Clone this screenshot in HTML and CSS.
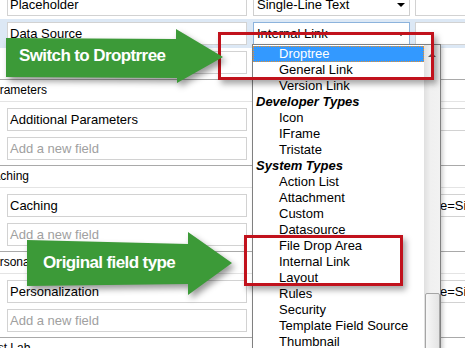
FILE: index.html
```html
<!DOCTYPE html>
<html lang="en">
<head>
  <meta charset="UTF-8">
  <title>Template Builder</title>
  <link rel="stylesheet" href="styles.css">
</head>
<body>

  <div class="builder">
    <div class="section section-data">
      <div class="rows">
        <div class="row">
          <div class="field">Placeholder</div>
          <div class="select">Single-Line Text</div>
          <div class="extra"></div>
        </div>
        <div class="row selected">
          <div class="field">Data Source</div>
          <div class="select focused">Internal Link</div>
          <div class="extra"></div>
        </div>
        <div class="row">
          <div class="field new">Add a new field</div>
        </div>
      </div>
    </div>

    <div class="section">
      <div class="section-title">Parameters</div>
      <div class="rows">
        <div class="row">
          <div class="field">Additional Parameters</div>
          <div class="select">Text</div>
          <div class="extra"></div>
        </div>
        <div class="row">
          <div class="field new">Add a new field</div>
        </div>
      </div>
    </div>

    <div class="section">
      <div class="section-title">Caching</div>
      <div class="rows">
        <div class="row">
          <div class="field">Caching</div>
          <div class="select">Caching</div>
          <div class="extra">Type=Sitecore</div>
        </div>
        <div class="row">
          <div class="field new">Add a new field</div>
        </div>
      </div>
    </div>

    <div class="section">
      <div class="section-title">Personalization</div>
      <div class="rows">
        <div class="row">
          <div class="field">Personalization</div>
          <div class="select">Rules</div>
          <div class="extra">Type=Sitecore</div>
        </div>
        <div class="row">
          <div class="field new">Add a new field</div>
        </div>
      </div>
    </div>

    <div class="section">
      <div class="section-title">Test Lab</div>
    </div>
  </div>

  <!-- open field type list -->
  <div class="dropdown">
    <div class="options">
      <div class="option active">Droptree</div>
      <div class="option">General Link</div>
      <div class="option">Version Link</div>
      <div class="group">Developer Types</div>
      <div class="option">Icon</div>
      <div class="option">IFrame</div>
      <div class="option">Tristate</div>
      <div class="group">System Types</div>
      <div class="option">Action List</div>
      <div class="option">Attachment</div>
      <div class="option">Custom</div>
      <div class="option">Datasource</div>
      <div class="option">File Drop Area</div>
      <div class="option">Internal Link</div>
      <div class="option">Layout</div>
      <div class="option">Rules</div>
      <div class="option">Security</div>
      <div class="option">Template Field Source</div>
      <div class="option">Thumbnail</div>
    </div>
    <div class="scrollbar">
      <div class="scroll-up"></div>
      <div class="scroll-thumb"></div>
    </div>
  </div>

  <!-- callouts -->
  <div class="callout callout-top"></div>
  <div class="callout callout-bottom"></div>

  <div class="arrow arrow-top">
    <svg viewBox="0 0 217 54" width="217" height="54">
      <polygon points="0,9 170,10 170,0 217,28 171,54 171,49 0,48" />
    </svg>
    <span class="arrow-label">Switch to Droptrree</span>
  </div>

  <div class="arrow arrow-bottom">
    <svg viewBox="0 0 205 63" width="205" height="63">
      <polygon points="0,8 161,12 161,0 205,31 161,63 161,52 0,54" />
    </svg>
    <span class="arrow-label">Original field type</span>
  </div>

</body>
</html>
```

FILE: styles.css
```css
body {
  margin: 0;
  width: 465px;
  height: 348px;
  overflow: hidden;
  position: relative;
  background-color: #fff;
  font-family: 'Liberation Sans', Arial, sans-serif;
  font-size: 13px;
  color: #000;
}

.builder {
  width: 540px;
  margin-top: -13px;
}

.section-title {
  height: 21px;
  line-height: 21px;
  font-size: 12px;
  text-indent: -15px;
  border-top: 1px solid #a9a9a9;
  border-bottom: 1px solid #e4e4e4;
}

.rows {
  padding: 3px 0 2px;
}

.row {
  display: flex;
  padding: 3px 0 3px 7px;
}

.row.selected {
  background-color: #dce8f5;
}

.field,
.select,
.extra {
  height: 23px;
  box-sizing: border-box;
  border: 1px solid #d2d2d2;
  background-color: #fff;
  line-height: 21px;
  white-space: nowrap;
  overflow: hidden;
}

.field {
  width: 240px;
  padding: 0 2px;
}

.field.new {
  color: #a0a0a0;
}

.select {
  width: 157px;
  margin-left: 6px;
  padding: 0 4px 0 3px;
  display: flex;
  align-items: center;
  justify-content: space-between;
  border-color: #cfcfcf;
}

.select::after {
  content: '';
  border-top: 4px solid #000;
  border-left: 4px solid transparent;
  border-right: 4px solid transparent;
}

.select.focused {
  border-color: #8cb3dc;
}

.extra {
  flex: 1;
  margin-left: 5px;
  padding: 0 3px;
}

/* dropdown list */
.dropdown {
  position: absolute;
  left: 252px;
  top: 44px;
  width: 189px;
  height: 312px;
  box-sizing: border-box;
  border: 1px solid #808080;
  background-color: #fff;
  display: flex;
  box-shadow: 2px 2px 4px rgba(0, 0, 0, 0.2);
  z-index: 1;
}

.options {
  flex: 1;
  padding-top: 1px;
}

.option,
.group {
  height: 16px;
  line-height: 16px;
  white-space: nowrap;
}

.option {
  padding-left: 26px;
}

.group {
  padding-left: 3px;
  font-weight: bold;
  font-style: italic;
}

.option.active {
  background-color: #3399ff;
  color: #fff;
  outline: 1px dotted #e8902c;
  outline-offset: -1px;
}

.scrollbar {
  width: 16px;
  background: linear-gradient(to right, #e0e0e0, #f0f0f0 40%, #f2f2f2);
  display: flex;
  flex-direction: column;
  align-items: center;
}

.scroll-up {
  width: 0;
  height: 0;
  margin-top: 8px;
  border-bottom: 4px solid #5a5a5a;
  border-left: 4px solid transparent;
  border-right: 4px solid transparent;
}

.scroll-thumb {
  width: 15px;
  height: 70px;
  margin-top: 236px;
  box-sizing: border-box;
  border: 1px solid #a5a5a5;
  border-radius: 2px;
  background: linear-gradient(to right, #f7f7f7, #e4e4e4);
}

/* red callout boxes */
.callout {
  position: absolute;
  box-sizing: border-box;
  border: 3px solid #c1121c;
  box-shadow: 3px 4px 6px rgba(0, 0, 0, 0.35);
  z-index: 2;
}

.callout-top {
  left: 218px;
  top: 32px;
  width: 216px;
  height: 48px;
}

.callout-bottom {
  left: 244px;
  top: 235px;
  width: 159px;
  height: 51px;
}

/* green arrows */
.arrow {
  position: absolute;
  z-index: 3;
}

.arrow svg {
  position: absolute;
  left: 0;
  top: 0;
  filter: drop-shadow(3px 4px 3px rgba(0, 0, 0, 0.4));
}

.arrow polygon {
  fill: #3c9a38;
}

.arrow-label {
  position: relative;
  display: block;
  color: #fff;
  font-weight: bold;
  font-size: 17px;
  letter-spacing: -0.6px;
  white-space: nowrap;
}

.arrow-top {
  left: 6px;
  top: 29px;
  width: 217px;
  height: 54px;
}

.arrow-top .arrow-label {
  padding-left: 13px;
  line-height: 54px;
}

.arrow-bottom {
  left: 27px;
  top: 232px;
  width: 205px;
  height: 63px;
}

.arrow-bottom .arrow-label {
  padding-left: 16px;
  line-height: 61px;
}
```
